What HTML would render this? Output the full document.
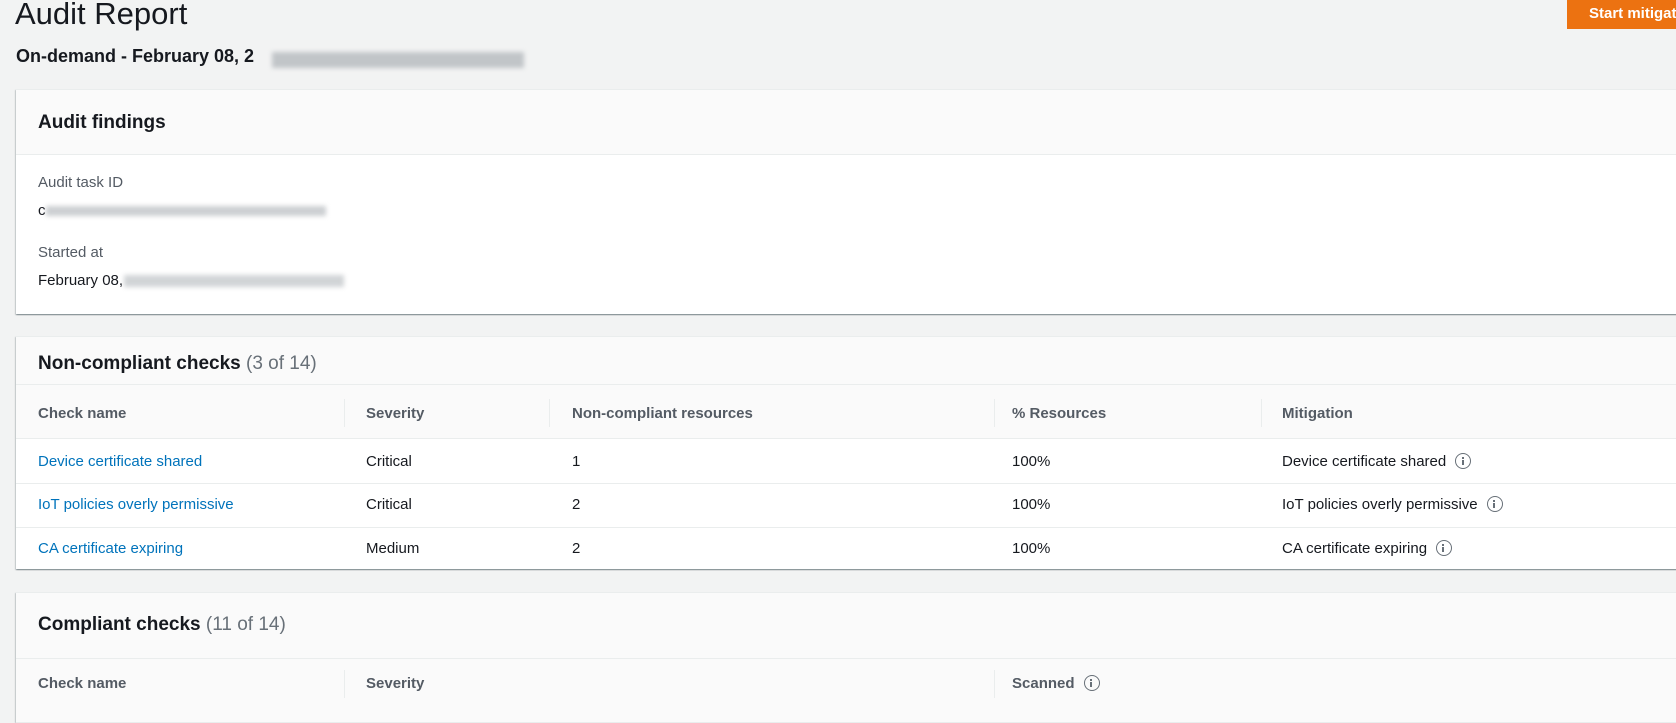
<!DOCTYPE html>
<html><head><meta charset="utf-8"><style>
*{margin:0;padding:0;box-sizing:border-box}
body{width:1676px;height:703px;overflow:hidden;background:#f2f3f3;font-family:"Liberation Sans",sans-serif;color:#16191f;position:relative}
.a{position:absolute;white-space:nowrap}
.card{position:absolute;left:16px;width:1680px;background:#fff;box-shadow:0 1px 1px 0 rgba(0,28,36,.3),1px 1px 1px 0 rgba(0,28,36,.15),-1px 1px 1px 0 rgba(0,28,36,.15);border-top:1px solid #eaeded}
.hd{position:absolute;left:0;right:0;top:0;background:#fafafa;border-bottom:1px solid #eaeded}
.h2{font-size:19px;font-weight:bold;color:#16191f}
.cnt{font-weight:normal;color:#687078}
.th{font-size:15px;font-weight:bold;color:#545b64}
.td{font-size:15px;color:#16191f}
.lk{color:#0073bb}
.dv{position:absolute;width:1px;height:28px;background:#eaeded}
.ln{position:absolute;left:0;right:0;height:1px;background:#eaeded}
.blur{position:absolute;background:#9aa0a6;filter:blur(2.5px);opacity:.7}
.ic{display:inline-block;width:16px;height:16px;border:1.6px solid #687078;border-radius:50%;vertical-align:-3px;margin-left:9px;position:relative}
.ic:before{content:"";position:absolute;left:5.4px;top:2.5px;width:2px;height:2px;background:#687078}
.ic:after{content:"";position:absolute;left:5.4px;top:5.8px;width:2px;height:5px;background:#687078}
</style></head><body>
<div class="a" style="left:15px;top:-4px;font-size:31px;color:#16191f">Audit Report</div>
<div class="a" style="left:16px;top:46px;font-size:18px;font-weight:bold">On-demand - February 08, 2</div>
<div class="blur" style="left:272px;top:52px;width:252px;height:16px;opacity:.55"></div>
<div class="a" style="left:1567px;top:0;width:120px;height:29px;background:#ec7211;color:#fff;font-weight:bold;font-size:15px;padding:5px 0 0 22px">Start mitigation</div>

<div class="card" style="top:89px;height:225px">
 <div class="hd" style="height:65px"></div>
 <div class="a h2" style="left:22px;top:22px">Audit findings</div>
 <div class="a" style="left:22px;top:84px;font-size:15px;color:#545b64">Audit task ID</div>
 <div class="a td" style="left:22px;top:112px">c</div>
 <div class="blur" style="left:30px;top:116px;width:280px;height:10px;opacity:.5"></div>
 <div class="a" style="left:22px;top:154px;font-size:15px;color:#545b64">Started at</div>
 <div class="a td" style="left:22px;top:182px">February 08,</div>
 <div class="blur" style="left:108px;top:185px;width:220px;height:12px;opacity:.45"></div>
</div>

<div class="card" style="top:336px;height:233px">
 <div class="hd" style="height:102px"></div>
 <div class="ln" style="top:47px"></div>
 <div class="a h2" style="left:22px;top:16px">Non-compliant checks <span class="cnt">(3 of 14)</span></div>
 <div class="a th" style="left:22px;top:68px">Check name</div>
 <div class="dv" style="left:328px;top:62px"></div>
 <div class="a th" style="left:350px;top:68px">Severity</div>
 <div class="dv" style="left:533px;top:62px"></div>
 <div class="a th" style="left:556px;top:68px">Non-compliant resources</div>
 <div class="dv" style="left:978px;top:62px"></div>
 <div class="a th" style="left:996px;top:68px">% Resources</div>
 <div class="dv" style="left:1245px;top:62px"></div>
 <div class="a th" style="left:1266px;top:68px">Mitigation</div>
 <div class="ln" style="top:146px"></div>
 <div class="ln" style="top:190px"></div>
 <div class="a td lk" style="left:22px;top:116px">Device certificate shared</div>
 <div class="a td" style="left:350px;top:116px">Critical</div>
 <div class="a td" style="left:556px;top:116px">1</div>
 <div class="a td" style="left:996px;top:116px">100%</div>
 <div class="a td" style="left:1266px;top:116px">Device certificate shared<span class="ic"></span></div>
 <div class="a td lk" style="left:22px;top:159px">IoT policies overly permissive</div>
 <div class="a td" style="left:350px;top:159px">Critical</div>
 <div class="a td" style="left:556px;top:159px">2</div>
 <div class="a td" style="left:996px;top:159px">100%</div>
 <div class="a td" style="left:1266px;top:159px">IoT policies overly permissive<span class="ic"></span></div>
 <div class="a td lk" style="left:22px;top:203px">CA certificate expiring</div>
 <div class="a td" style="left:350px;top:203px">Medium</div>
 <div class="a td" style="left:556px;top:203px">2</div>
 <div class="a td" style="left:996px;top:203px">100%</div>
 <div class="a td" style="left:1266px;top:203px">CA certificate expiring<span class="ic"></span></div>
</div>

<div class="card" style="top:592px;height:130px">
 <div class="hd" style="height:130px"></div>
 <div class="ln" style="top:65px"></div>
 <div class="a h2" style="left:22px;top:21px">Compliant checks <span class="cnt">(11 of 14)</span></div>
 <div class="a th" style="left:22px;top:82px">Check name</div>
 <div class="dv" style="left:328px;top:77px"></div>
 <div class="a th" style="left:350px;top:82px">Severity</div>
 <div class="dv" style="left:978px;top:77px"></div>
 <div class="a th" style="left:996px;top:82px">Scanned<span class="ic"></span></div>
</div>
</body></html>
